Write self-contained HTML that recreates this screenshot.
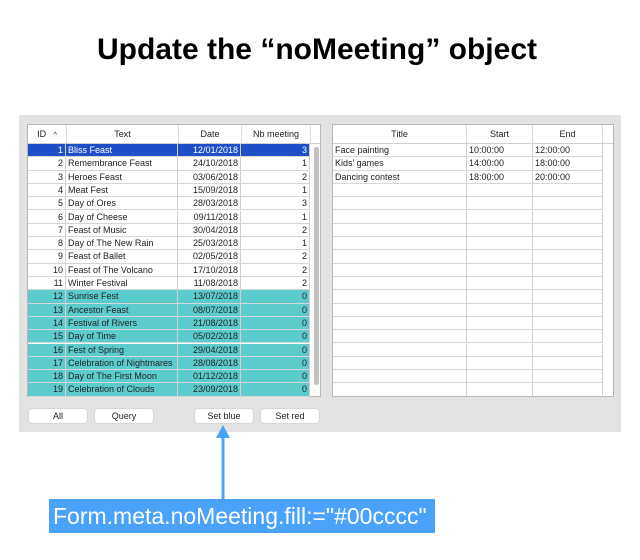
<!DOCTYPE html>
<html><head><meta charset="utf-8"><style>
*{margin:0;padding:0;box-sizing:border-box}
body{width:640px;height:560px;background:#fff;position:relative;font-family:"Liberation Sans",Arial,sans-serif;overflow:hidden}
h1{position:absolute;top:33px;left:0;width:634px;text-align:center;font-size:30px;font-weight:bold;color:#000}
.panel{position:absolute;left:19px;top:115px;width:602px;height:317px;background:#e3e3e3}
.tbl{position:absolute;background:#fff;border:1px solid #b8b8b8;overflow:hidden}
.hdr{position:absolute;top:0;left:0;height:19px;display:flex;border-bottom:1px solid #d0d0d0;background:#fff}
.hdr div{font-size:9px;text-align:center;line-height:18px;border-right:1px solid #dcdcdc;color:#222}
.row{position:absolute;left:0;height:13.3px;display:flex;font-size:9px;line-height:12.3px;color:#222;border-bottom:1px solid #d6d6d6}
.row div{border-right:1px solid #d0d0d0;padding:0 2px;white-space:nowrap;overflow:hidden}
.r{text-align:right}
.sel{background:#1f4fc8;color:#fff}
.cy{background:#5ccbcb}
.btn{position:absolute;top:409px;height:14px;width:58px;background:#fff;border-radius:3px;font-size:9px;text-align:center;line-height:14px;color:#222;box-shadow:0 0 0 .5px #c8c8c8}
.label{position:absolute;left:49px;top:499px;width:386px;height:34px;background:#4aa3fb;color:#fff;font-size:23px;line-height:34px;padding-left:4px;white-space:nowrap}
</style></head><body>
<h1>Update the “noMeeting” object</h1>
<div class="panel"></div>

<div class="tbl" style="left:27px;top:124px;width:294px;height:273px">
<div class="hdr" style="width:294px"><div style="width:39px">ID &nbsp;&nbsp;<span style="font-size:7px">^</span></div><div style="width:112px">Text</div><div style="width:63px">Date</div><div style="width:69px">Nb meeting</div></div>
<div style="position:absolute;left:284px;top:20px;width:9px;height:253px;background:#fafafa"></div>
<div style="position:absolute;left:286px;top:22px;width:5px;height:238px;background:#c2c2c2;border-radius:3px"></div>
</div>

<div class="tbl" style="left:332px;top:124px;width:282px;height:273px">
<div class="hdr" style="width:282px"><div style="width:134px">Title</div><div style="width:66px">Start</div><div style="width:70px">End</div></div>
</div>

<div class="btn" style="left:29px">All</div>
<div class="btn" style="left:95px">Query</div>
<div class="btn" style="left:195px">Set blue</div>
<div class="btn" style="left:261px">Set red</div>

<svg style="position:absolute;left:0;top:0" width="640" height="560">
<line x1="223" y1="434" x2="223" y2="500" stroke="#4aa3fb" stroke-width="3"/>
<polygon points="216,438 230,438 223,425" fill="#4aa3fb"/>
</svg>
<div class="label">Form.meta.noMeeting.fill:="#00cccc"</div>

<div style="position:absolute;left:28px;top:144px">
<div class="row sel" style="top:0"><div class="r" style="width:38px">1</div><div style="width:112px">Bliss Feast</div><div class="r" style="width:63px">12/01/2018</div><div class="r" style="width:69px">3</div></div>
<div class="row" style="top:13.3px"><div class="r" style="width:38px">2</div><div style="width:112px">Remembrance Feast</div><div class="r" style="width:63px">24/10/2018</div><div class="r" style="width:69px">1</div></div>
<div class="row" style="top:26.6px"><div class="r" style="width:38px">3</div><div style="width:112px">Heroes Feast</div><div class="r" style="width:63px">03/06/2018</div><div class="r" style="width:69px">2</div></div>
<div class="row" style="top:39.9px"><div class="r" style="width:38px">4</div><div style="width:112px">Meat Fest</div><div class="r" style="width:63px">15/09/2018</div><div class="r" style="width:69px">1</div></div>
<div class="row" style="top:53.2px"><div class="r" style="width:38px">5</div><div style="width:112px">Day of Ores</div><div class="r" style="width:63px">28/03/2018</div><div class="r" style="width:69px">3</div></div>
<div class="row" style="top:66.5px"><div class="r" style="width:38px">6</div><div style="width:112px">Day of Cheese</div><div class="r" style="width:63px">09/11/2018</div><div class="r" style="width:69px">1</div></div>
<div class="row" style="top:79.8px"><div class="r" style="width:38px">7</div><div style="width:112px">Feast of Music</div><div class="r" style="width:63px">30/04/2018</div><div class="r" style="width:69px">2</div></div>
<div class="row" style="top:93.1px"><div class="r" style="width:38px">8</div><div style="width:112px">Day of The New Rain</div><div class="r" style="width:63px">25/03/2018</div><div class="r" style="width:69px">1</div></div>
<div class="row" style="top:106.4px"><div class="r" style="width:38px">9</div><div style="width:112px">Feast of Ballet</div><div class="r" style="width:63px">02/05/2018</div><div class="r" style="width:69px">2</div></div>
<div class="row" style="top:119.7px"><div class="r" style="width:38px">10</div><div style="width:112px">Feast of The Volcano</div><div class="r" style="width:63px">17/10/2018</div><div class="r" style="width:69px">2</div></div>
<div class="row" style="top:133px"><div class="r" style="width:38px">11</div><div style="width:112px">Winter Festival</div><div class="r" style="width:63px">11/08/2018</div><div class="r" style="width:69px">2</div></div>
<div class="row cy" style="top:146.3px"><div class="r" style="width:38px">12</div><div style="width:112px">Sunrise Fest</div><div class="r" style="width:63px">13/07/2018</div><div class="r" style="width:69px">0</div></div>
<div class="row cy" style="top:159.6px"><div class="r" style="width:38px">13</div><div style="width:112px">Ancestor Feast</div><div class="r" style="width:63px">08/07/2018</div><div class="r" style="width:69px">0</div></div>
<div class="row cy" style="top:172.9px"><div class="r" style="width:38px">14</div><div style="width:112px">Festival of Rivers</div><div class="r" style="width:63px">21/08/2018</div><div class="r" style="width:69px">0</div></div>
<div class="row cy" style="top:186.2px"><div class="r" style="width:38px">15</div><div style="width:112px">Day of Time</div><div class="r" style="width:63px">05/02/2018</div><div class="r" style="width:69px">0</div></div>
<div class="row cy" style="top:199.5px"><div class="r" style="width:38px">16</div><div style="width:112px">Fest of Spring</div><div class="r" style="width:63px">29/04/2018</div><div class="r" style="width:69px">0</div></div>
<div class="row cy" style="top:212.8px"><div class="r" style="width:38px">17</div><div style="width:112px">Celebration of Nightmares</div><div class="r" style="width:63px">28/08/2018</div><div class="r" style="width:69px">0</div></div>
<div class="row cy" style="top:226.1px"><div class="r" style="width:38px">18</div><div style="width:112px">Day of The First Moon</div><div class="r" style="width:63px">01/12/2018</div><div class="r" style="width:69px">0</div></div>
<div class="row cy" style="top:239.4px"><div class="r" style="width:38px">19</div><div style="width:112px">Celebration of Clouds</div><div class="r" style="width:63px">23/09/2018</div><div class="r" style="width:69px">0</div></div>
</div>

<div style="position:absolute;left:333px;top:144px">
<div class="row" style="top:0"><div style="width:134px">Face painting</div><div style="width:66px">10:00:00</div><div style="width:70px">12:00:00</div></div>
<div class="row" style="top:13.3px"><div style="width:134px">Kids’ games</div><div style="width:66px">14:00:00</div><div style="width:70px">18:00:00</div></div>
<div class="row" style="top:26.6px"><div style="width:134px">Dancing contest</div><div style="width:66px">18:00:00</div><div style="width:70px">20:00:00</div></div>
<div class="row" style="top:39.9px"><div style="width:134px;height:13px"></div><div style="width:66px"></div><div style="width:70px"></div></div>
<div class="row" style="top:53.2px"><div style="width:134px;height:13px"></div><div style="width:66px"></div><div style="width:70px"></div></div>
<div class="row" style="top:66.5px"><div style="width:134px;height:13px"></div><div style="width:66px"></div><div style="width:70px"></div></div>
<div class="row" style="top:79.8px"><div style="width:134px;height:13px"></div><div style="width:66px"></div><div style="width:70px"></div></div>
<div class="row" style="top:93.1px"><div style="width:134px;height:13px"></div><div style="width:66px"></div><div style="width:70px"></div></div>
<div class="row" style="top:106.4px"><div style="width:134px;height:13px"></div><div style="width:66px"></div><div style="width:70px"></div></div>
<div class="row" style="top:119.7px"><div style="width:134px;height:13px"></div><div style="width:66px"></div><div style="width:70px"></div></div>
<div class="row" style="top:133px"><div style="width:134px;height:13px"></div><div style="width:66px"></div><div style="width:70px"></div></div>
<div class="row" style="top:146.3px"><div style="width:134px;height:13px"></div><div style="width:66px"></div><div style="width:70px"></div></div>
<div class="row" style="top:159.6px"><div style="width:134px;height:13px"></div><div style="width:66px"></div><div style="width:70px"></div></div>
<div class="row" style="top:172.9px"><div style="width:134px;height:13px"></div><div style="width:66px"></div><div style="width:70px"></div></div>
<div class="row" style="top:186.2px"><div style="width:134px;height:13px"></div><div style="width:66px"></div><div style="width:70px"></div></div>
<div class="row" style="top:199.5px"><div style="width:134px;height:13px"></div><div style="width:66px"></div><div style="width:70px"></div></div>
<div class="row" style="top:212.8px"><div style="width:134px;height:13px"></div><div style="width:66px"></div><div style="width:70px"></div></div>
<div class="row" style="top:226.1px"><div style="width:134px;height:13px"></div><div style="width:66px"></div><div style="width:70px"></div></div>
<div class="row" style="top:239.4px;border-bottom:none"><div style="width:134px;height:13px"></div><div style="width:66px"></div><div style="width:70px"></div></div>
</div>
</body></html>
